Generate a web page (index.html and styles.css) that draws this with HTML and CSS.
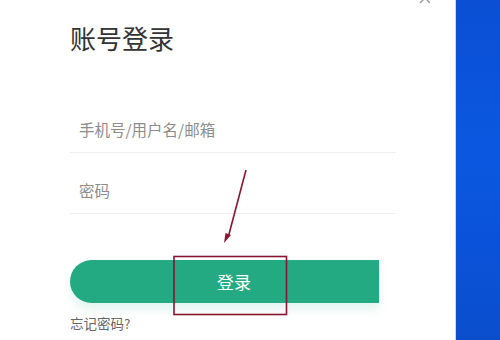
FILE: index.html
```html
<!DOCTYPE html>
<html lang="zh-CN">
<head>
<meta charset="utf-8">
<title>账号登录</title>
<link rel="stylesheet" href="styles.css">
</head>
<body>
<div class="page">
  <div class="panel">
    <svg class="close" width="14" height="14" viewBox="0 0 14 14"><path d="M2 2 L12 12 M12 2 L2 12" stroke="#9a9a9a" stroke-width="1.4" fill="none"/></svg>
    <h1 class="title">账号登录</h1>
    <div class="field"><input class="input" type="text" placeholder="手机号/用户名/邮箱"></div>
    <div class="field"><input class="input" type="password" placeholder="密码"></div>
    <button class="btn">登录</button>
    <a class="forgot" href="#">忘记密码?</a>
  </div>
  <div class="side"></div>
  <svg class="annot" width="500" height="340" viewBox="0 0 500 340">
    <line x1="246" y1="170" x2="228.5" y2="236" stroke="#8a1530" stroke-width="1.6"/>
    <path d="M224 243 L225.5 233 L231 235 Z" fill="#8a1530"/>
    <rect x="174" y="256.5" width="112.5" height="58" fill="none" stroke="#8a1530" stroke-width="1.6"/>
  </svg>
</div>
</body>
</html>
```

FILE: styles.css
```css
html, body {
  margin: 0;
  padding: 0;
  background: #ffffff;
}
.page {
  position: relative;
  width: 500px;
  height: 340px;
  display: flex;
  overflow: hidden;
  font-family: "Noto Sans CJK SC", "Noto Sans", sans-serif;
}
.panel {
  flex: 1;
  position: relative;
  padding: 21px 0 0 70px;
  display: flex;
  flex-direction: column;
  align-items: flex-start;
}
.close {
  position: absolute;
  left: 418px;
  top: -9px;
}
.title {
  margin: 0;
  font-size: 26px;
  line-height: 34px;
  font-weight: 400;
  color: #333333;
}
.field {
  box-sizing: border-box;
  width: 326px;
  height: 61px;
  border-bottom: 1px solid #eeeeee;
  display: flex;
  align-items: flex-end;
  padding: 0 0 11px 9px;
}
.field:first-of-type {
  margin-top: 37px;
}
.input {
  border: none;
  outline: none;
  padding: 0;
  width: 100%;
  height: 24px;
  font-family: inherit;
  font-size: 15.5px;
  color: #333;
  background: transparent;
}
.input::placeholder {
  color: #8c8c8c;
}
.btn {
  margin-top: 46px;
  width: 309px;
  height: 43px;
  border: none;
  border-radius: 22px 0 0 22px;
  background: #23aa82;
  color: #ffffff;
  font-family: "Noto Sans CJK SC", sans-serif;
  font-size: 17px;
  padding: 0 0 0 19px;
  box-shadow: 0 7px 10px rgba(35, 170, 130, 0.12);
}
.forgot {
  margin-top: 10px;
  font-size: 13.5px;
  line-height: 20px;
  color: #666666;
  text-decoration: none;
}
.side {
  width: 44px;
  border-left: 1px solid #d8d8d8;
  background: linear-gradient(180deg, #0a4fd4 0%, #0b58e0 45%, #0a52d8 75%, #0a4ecc 100%);
}
.annot {
  position: absolute;
  left: 0;
  top: 0;
  pointer-events: none;
}
```
